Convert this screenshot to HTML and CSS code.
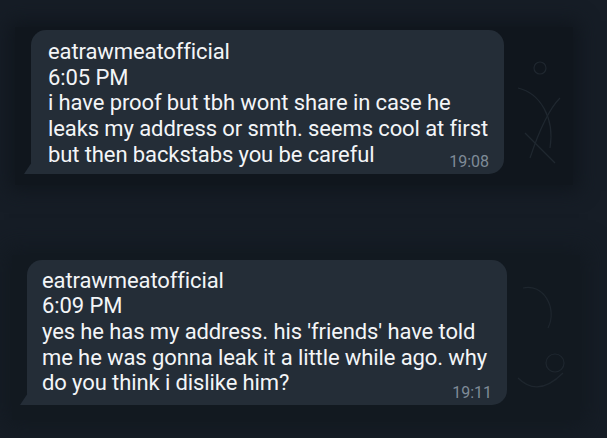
FILE: index.html
```html
<!DOCTYPE html>
<html>
<head>
<meta charset="utf-8">
<link rel="stylesheet" href="styles.css">
</head>
<body>
<main class="feed">
  <section class="panel panel-one">
    <div class="bubble bubble-one">
      <div class="msg">eatrawmeatofficial<br>6:05 PM<br>i have proof but tbh wont share in case he<br>leaks my address or smth. seems cool at first<br>but then backstabs you be careful</div>
      <span class="time">19:08</span>
    </div>
    <svg class="doodle" width="60" height="140" viewBox="0 0 60 140" fill="none" stroke="#1f272f" stroke-width="1.2">
      <circle cx="30" cy="30" r="6"/>
      <path d="M8 50 C 30 55, 45 80, 40 110"/>
      <path d="M50 60 C 40 70, 30 90, 20 120"/>
      <path d="M15 95 L 45 125"/>
    </svg>
  </section>
  <section class="panel panel-two">
    <div class="bubble bubble-two">
      <div class="msg">eatrawmeatofficial<br>6:09 PM<br>yes he has my address. his 'friends' have told<br>me he was gonna leak it a little while ago. why<br>do you think i dislike him?</div>
      <span class="time">19:11</span>
    </div>
    <svg class="doodle" width="60" height="140" viewBox="0 0 60 140" fill="none" stroke="#1e262e" stroke-width="1.2">
      <path d="M10 20 C 30 15, 45 40, 35 60"/>
      <circle cx="42" cy="95" r="9"/>
      <path d="M5 110 C 20 125, 35 120, 50 105"/>
    </svg>
  </section>
</main>
</body>
</html>
```

FILE: styles.css
```css
html, body {
  margin: 0;
  padding: 0;
  background: #161d26;
  width: 607px;
  height: 438px;
  overflow: hidden;
}

.feed {
  display: flex;
  flex-direction: column;
  font-family: Roboto, "Noto Sans", sans-serif;
}

.panel {
  display: flex;
  align-items: flex-start;
  background: #10161d;
  box-shadow: 0 0 18px 6px #10161d;
}

.panel-one {
  margin: 27px 0 0 15px;
  width: 558px;
  height: 158px;
  padding: 3px 0 0 16px;
  box-sizing: border-box;
}

.panel-two {
  margin: 70px 0 0 12px;
  width: 568px;
  height: 165px;
  padding: 5px 0 0 15px;
  box-sizing: border-box;
  background: #121920;
  box-shadow: 0 0 22px 8px #121920;
}

.bubble {
  position: relative;
  background: #242d37;
  border-radius: 15px 15px 15px 0;
  color: #f3f5f7;
  box-sizing: border-box;
}

.bubble::before {
  content: "";
  position: absolute;
  left: -7px;
  bottom: 0;
  width: 8px;
  height: 12px;
  background: #242d37;
  clip-path: polygon(100% 0, 100% 100%, 0 100%);
}

.bubble-one {
  width: 473px;
  height: 144px;
  padding: 9px 15px 7px 17px;
}

.bubble-two {
  width: 480px;
  height: 145px;
  padding: 7.5px 15px 8px 15px;
}

.msg {
  font-size: 22px;
  line-height: 25.7px;
  white-space: nowrap;
  letter-spacing: -0.1px;
}

.time {
  position: absolute;
  right: 15px;
  bottom: 4.5px;
  font-size: 16px;
  line-height: 16px;
  color: #7f8b97;
}

.doodle {
  margin: 8px 0 0 6px;
  flex: none;
}
```
